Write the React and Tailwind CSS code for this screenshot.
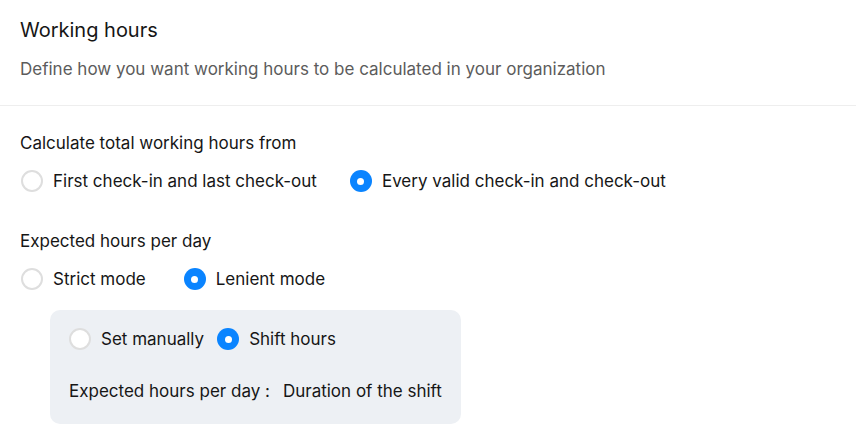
import React from "react";

function Radio({ checked, label, className = "" }) {
  return (
    <label className={`flex items-center gap-[10px] ${className}`}>
      {checked ? (
        <span className="flex h-[22px] w-[22px] shrink-0 items-center justify-center rounded-full bg-[#0a84ff]">
          <span className="h-[7px] w-[7px] rounded-full bg-white" />
        </span>
      ) : (
        <span className="h-[22px] w-[22px] shrink-0 rounded-full border-2 border-[#dedede] bg-white" />
      )}
      <span>{label}</span>
    </label>
  );
}

export default function App() {
  return (
    <div
      className="h-[443px] w-[856px] overflow-hidden bg-white text-[#161616]"
      style={{ fontFamily: "Inter, 'Noto Sans', sans-serif" }}
    >
      <div className="px-5 pt-[18px] pb-[25px] border-b border-[#eeeeee]">
        <h1 className="text-[20px] leading-[24px] text-[#161616]">Working hours</h1>
        <p className="mt-[16px] text-[17px] leading-[22px] text-[#5c5c5c]">
          Define how you want working hours to be calculated in your organization
        </p>
      </div>

      <div className="px-5 pt-[26px] text-[17px] leading-[22px]">
        <div>Calculate total working hours from</div>
        <div className="mt-[16px] flex items-center">
          <Radio label="First check-in and last check-out" className="ml-[1px]" />
          <Radio checked label="Every valid check-in and check-out" className="ml-[33px]" />
        </div>

        <div className="mt-[38px]">Expected hours per day</div>
        <div className="mt-[16px] flex items-center">
          <Radio label="Strict mode" className="ml-[1px]" />
          <Radio checked label="Lenient mode" className="ml-[38px]" />
        </div>

        <div className="mt-[20px] ml-[30px] w-[411px] rounded-[10px] bg-[#edf0f4] px-[19px] pt-[18px] pb-[22px]">
          <div className="flex items-center">
            <Radio label="Set manually" />
            <Radio checked label="Shift hours" className="ml-[13px]" />
          </div>
          <div className="mt-[30px] flex">
            <span>Expected hours per day :</span>
            <span className="ml-[13px]">Duration of the shift</span>
          </div>
        </div>
      </div>
    </div>
  );
}
